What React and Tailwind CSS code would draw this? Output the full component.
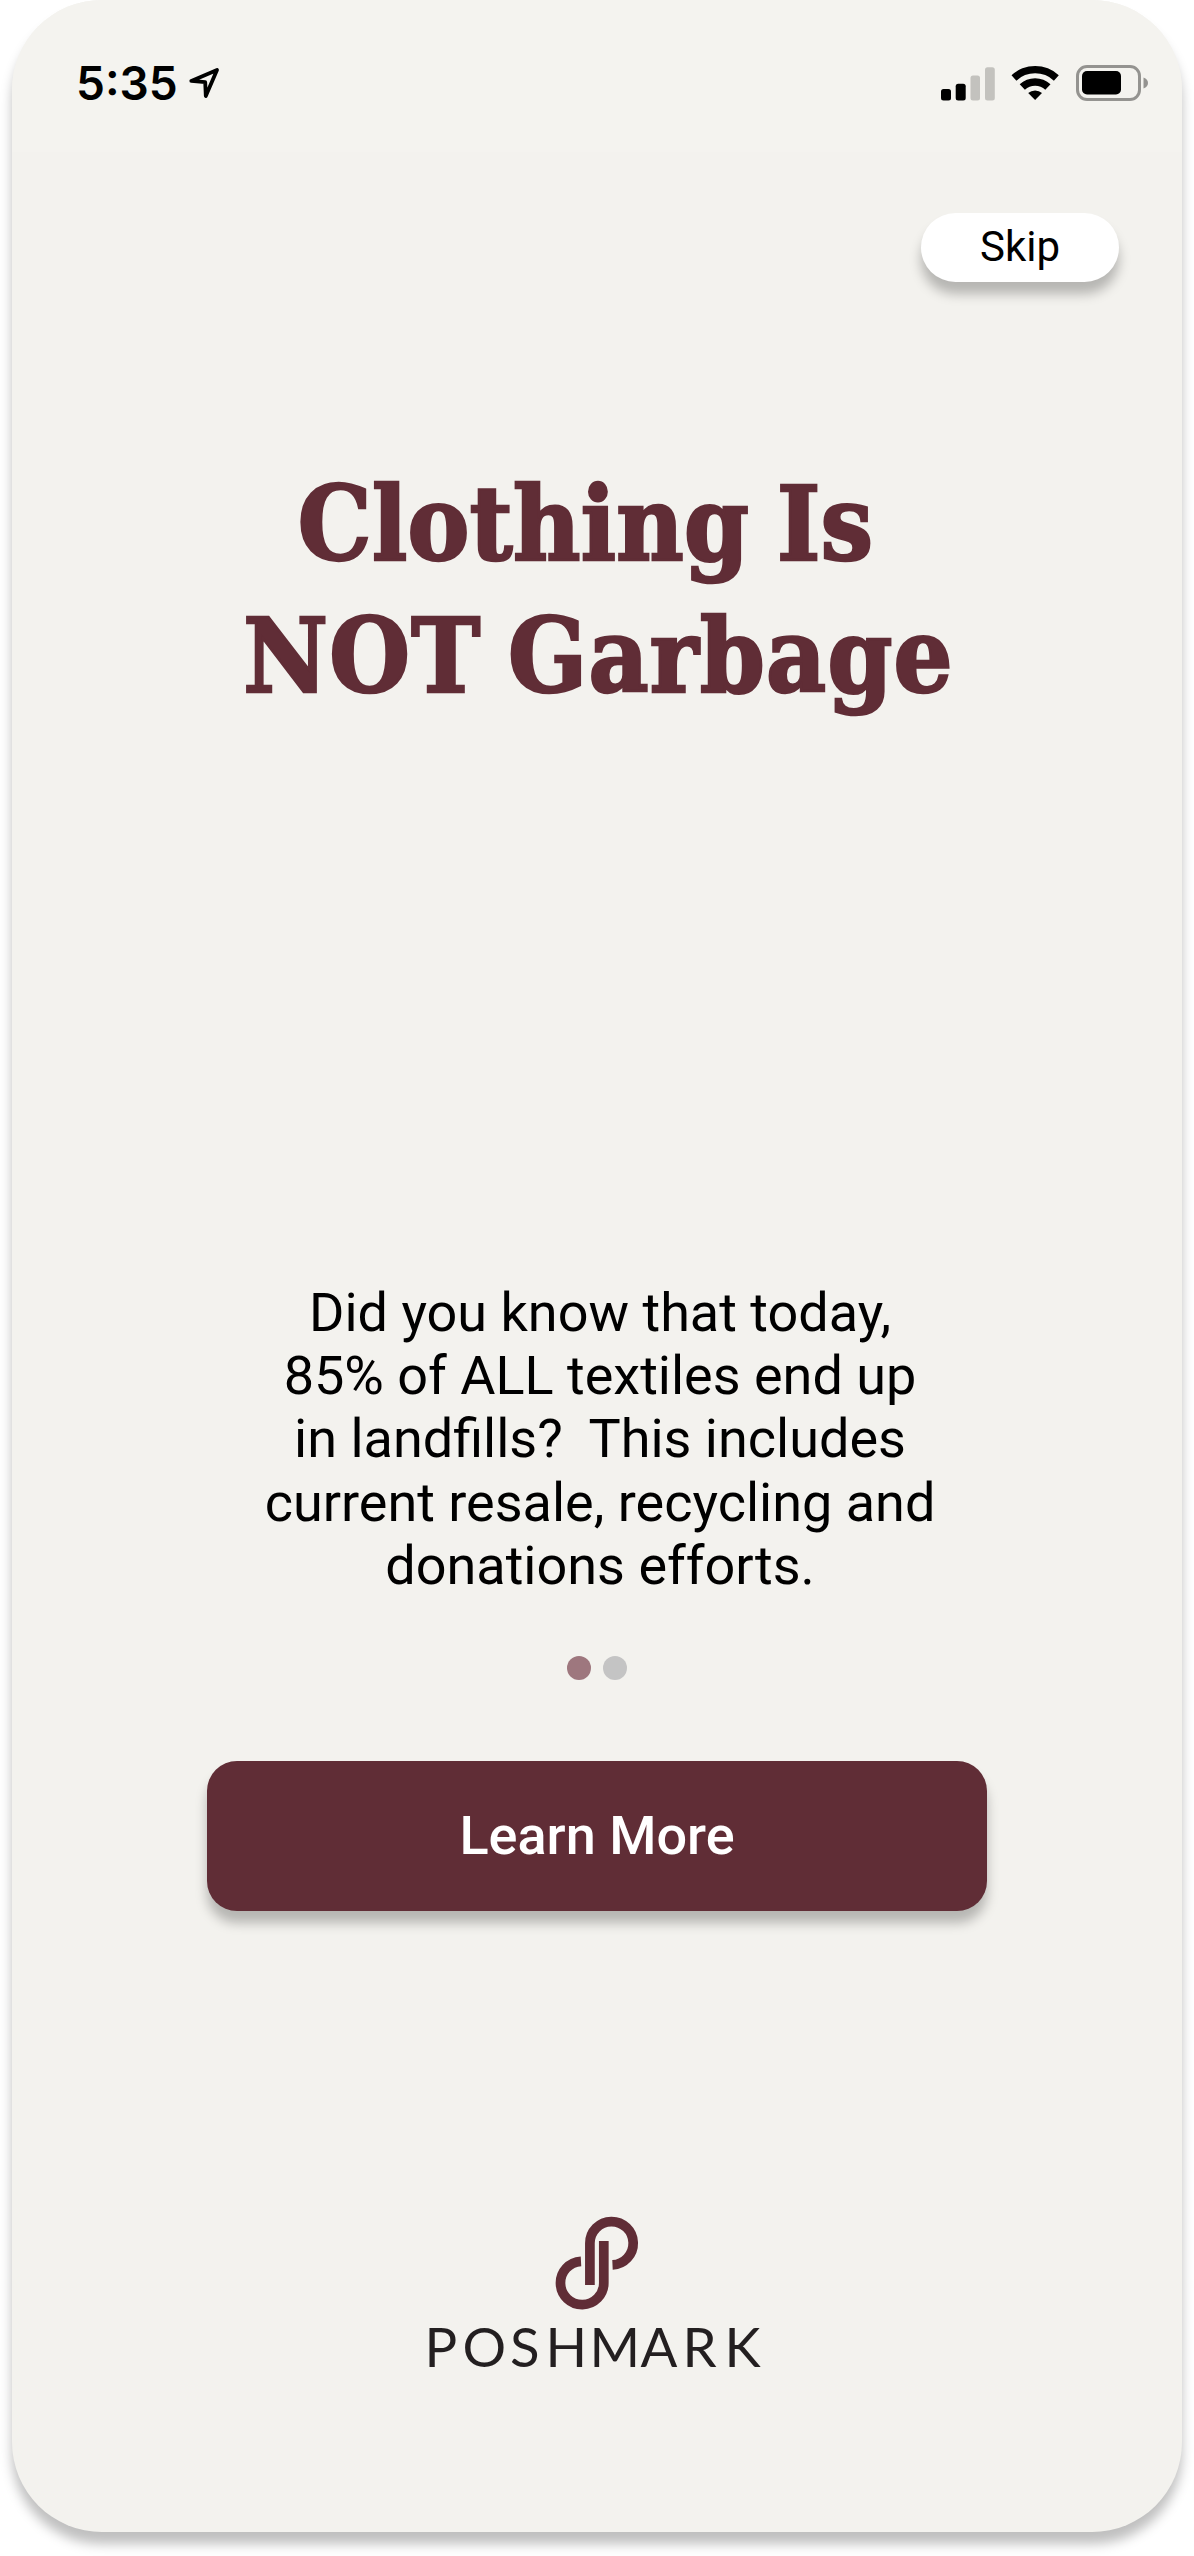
import React from 'react';

const SignalIcon = () => (
  <svg width="54" height="34" viewBox="0 0 54 34">
    <rect x="0" y="22" width="10" height="11.500" rx="2.500" fill="#000" />
    <rect x="14.700" y="16.700" width="10" height="16.800" rx="2.500" fill="#000" />
    <rect x="29.500" y="8.500" width="9.500" height="25" rx="2.500" fill="#c3c2be" />
    <rect x="44" y="0.300" width="9.800" height="33.200" rx="2.500" fill="#c3c2be" />
  </svg>
);

const WifiIcon = () => (
  <svg width="48" height="35" viewBox="0 0 48 35">
    <path d="M0.500 10.300A34.500 34.500 0 0 1 47.800 10.300L42.900 15.700A27 27 0 0 0 5.400 15.700Z" />
    <path d="M8.700 19.300A22.500 22.500 0 0 1 39.500 19.300L34.300 24.700A15 15 0 0 0 13.900 24.700Z" />
    <path d="M17.200 28A10.500 10.500 0 0 1 31 28L24.100 35Z" />
  </svg>
);

const BatteryIcon = () => (
  <svg width="72" height="36" viewBox="0 0 72 36">
    <rect x="1.500" y="1.500" width="62" height="33" rx="9.500" fill="none" stroke="#949390" strokeWidth="3" />
    <rect x="6" y="6" width="39" height="23.500" rx="5" fill="#000" />
    <path d="M67.500 12.500c3 1 4.500 3 4.500 5.500s-1.500 4.500-4.500 5.500z" fill="#949390" />
  </svg>
);

const LocationIcon = () => (
  <svg width="34" height="36" viewBox="0 0 34 36" fill="none" stroke="#000" strokeWidth="3.800" strokeLinejoin="round">
    <path d="M3.300 15.900L29 4.900L17.800 31L17.200 17.200Z" />
  </svg>
);

const PoshmarkLogo = () => (
  <svg width="354" height="180" viewBox="0 0 354 180">
    <g fill="none" stroke="#602d36" strokeWidth="9.700">
      <path d="M169.900 70V28.200A21.650 21.650 0 1 1 192.500 49.850" />
      <path d="M183.800 26V68A21.650 21.650 0 1 1 161 46.350" />
    </g>
    <text
      y="151.500"
      x="4.500 42.500 90 125.500 169.500 220.500 262.500 304.500"
      fontSize="54.500"
      fill="#231f20"
      className="font-[Lato]"
    >
      POSHMARK
    </text>
  </svg>
);

const lines = [
  'Did you know that today,',
  '85% of ALL textiles end up',
  'in landfills?  This includes',
  'current resale, recycling and',
  'donations efforts.',
];

const StatusBar = () => (
  <header className="flex h-[152px] items-start justify-between bg-[#f4f3ef] pt-[65px] pr-[34px] pl-[64px]">
    <div className="flex items-start gap-2.5">
      <span className="font-[Inter] text-[46px] leading-[36px] font-semibold">5:35</span>
      <LocationIcon />
    </div>
    <div className="flex items-start">
      <div className="mt-[1.500px] mr-4"><SignalIcon /></div>
      <div className="mr-[17px]"><WifiIcon /></div>
      <BatteryIcon />
    </div>
  </header>
);

export default function App() {
  return (
    <div className="h-[2556px] w-[1194px] overflow-hidden bg-white px-3 font-[Roboto] text-black">
      <main className="flex h-[2532px] flex-col overflow-hidden rounded-[90px] bg-[#f3f2ee] shadow-[0_12px_12px_rgba(0,0,0,0.25)]">
        <StatusBar />
        <button className="mt-[61px] mr-[63px] h-[69px] w-[198px] self-end rounded-full bg-white pb-0.5 text-[42px] leading-none shadow-[0_12px_12px_rgba(0,0,0,0.25)]">
          Skip
        </button>
        <h1 className="mt-[176px] flex flex-col items-center font-['DejaVu_Serif_Condensed','DejaVu_Serif',serif] text-[103px] leading-[132px] font-bold whitespace-nowrap text-[#602d36] [-webkit-text-stroke:2.500px_#602d36]">
          <span className="pr-[23px] tracking-[0.4px] [word-spacing:-5px]">Clothing Is</span>
          <span className="pl-[3px] tracking-[1.300px] [word-spacing:-7px]">NOT Garbage</span>
        </h1>
        <p className="mt-[559px] flex flex-col items-center pl-1.5 text-[54px] leading-[63.200px] whitespace-pre">
          {lines.map((line) => (
            <span key={line}>{line}</span>
          ))}
        </p>
        <div className="mt-[59px] flex justify-center gap-3">
          <span className="size-6 rounded-full bg-[#9e777e]" />
          <span className="size-6 rounded-full bg-[#c4c4c4]" />
        </div>
        <button className="mt-[81px] h-[150px] w-[780px] self-center rounded-[30px] bg-[#602d36] pb-0.5 text-[54px] font-medium text-white shadow-[0_12px_12px_rgba(0,0,0,0.25)]">
          Learn More
        </button>
        <div className="mt-[304px] flex justify-center">
          <PoshmarkLogo />
        </div>
      </main>
    </div>
  );
}
